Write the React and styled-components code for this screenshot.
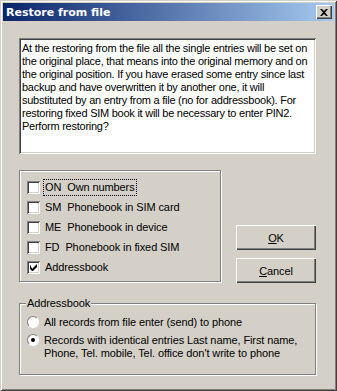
import React, { useState } from "react";
import styled, { createGlobalStyle } from "styled-components";

const Global = createGlobalStyle`
  html, body { margin: 0; padding: 0; background: #d4d0c8; }
  body { font-family: "Liberation Sans", Arial, sans-serif; font-size: 11px; color: #000; letter-spacing: -0.1px; }
`;

const Window = styled.div`
  width: 337px;
  height: 391px;
  box-sizing: border-box;
  background: #d4d0c8;
  padding: 3px;
  box-shadow: inset 1px 1px 0 #d4d0c8, inset -1px -1px 0 #404040,
    inset 2px 2px 0 #ffffff, inset -2px -2px 0 #808080;
  display: flex;
  flex-direction: column;
`;

const TitleBar = styled.div`
  height: 18px;
  display: flex;
  align-items: center;
  justify-content: space-between;
  padding: 0 2px 0 3px;
  background: linear-gradient(to right, #0a246a, #a6caf0);
`;

const Title = styled.span`
  color: #fff;
  font-family: Tahoma, "DejaVu Sans", sans-serif;
  font-weight: bold;
  font-size: 11px;
  letter-spacing: 0;
`;

const CloseBtn = styled.div`
  width: 16px;
  height: 14px;
  box-sizing: border-box;
  background: #d4d0c8;
  box-shadow: inset 1px 1px 0 #fff, inset -1px -1px 0 #404040,
    inset -2px -2px 0 #808080;
  display: flex;
  align-items: center;
  justify-content: center;
`;

const Body = styled.div`
  flex: 1;
  padding: 17px 18px 0 16px;
  display: flex;
  flex-direction: column;
`;

const Message = styled.div`
  height: 116px;
  box-sizing: border-box;
  background: #fff;
  padding: 4px 2px 4px 3px;
  line-height: 13px;
  letter-spacing: -0.25px;
  box-shadow: inset 1px 1px 0 #808080, inset -1px -1px 0 #fff,
    inset 2px 2px 0 #404040, inset -2px -2px 0 #d4d0c8;
`;

const Middle = styled.div`
  margin-top: 16px;
  display: flex;
  align-items: flex-end;
  gap: 15px;
`;

const Group = styled.div`
  position: relative;
  box-sizing: border-box;
  width: ${(p) => p.width || "auto"};
  height: ${(p) => p.height};
  margin-top: ${(p) => p.mt || "0"};
  border: 1px solid #808080;
  box-shadow: inset 1px 1px 0 #fff, 1px 1px 0 #fff;
  padding: ${(p) => p.pad};
  display: flex;
  flex-direction: column;
`;

const Legend = styled.span`
  position: absolute;
  top: -7px;
  left: 6px;
  padding: 0 1px;
  background: #d4d0c8;
  line-height: 13px;
`;

const Row = styled.label`
  display: flex;
  align-items: ${(p) => (p.top ? "flex-start" : "center")};
  height: ${(p) => (p.top ? "auto" : "20px")};
  margin-top: ${(p) => p.mt || "0"};
  gap: 4px;
  line-height: 13px;
`;

const Box = styled.span`
  width: 13px;
  height: 13px;
  flex: none;
  box-sizing: border-box;
  background: #fff;
  box-shadow: inset 1px 1px 0 #808080, inset -1px -1px 0 #fff,
    inset 2px 2px 0 #404040, inset -2px -2px 0 #d4d0c8;
  display: flex;
  align-items: center;
  justify-content: center;
`;

const Radio = styled.span`
  width: 12px;
  height: 12px;
  flex: none;
  border-radius: 50%;
  box-sizing: border-box;
  background: #fff;
  border: 1px solid;
  border-color: #808080 #fff #fff #808080;
  display: flex;
  align-items: center;
  justify-content: center;
  margin-top: 1px;
  &::after {
    content: "";
    width: 4px;
    height: 4px;
    border-radius: 50%;
    background: ${(p) => (p.on ? "#000" : "transparent")};
  }
`;

const Text = styled.span`
  white-space: pre;
  padding: 1px 1px;
  outline: ${(p) => (p.focus ? "1px dotted #000" : "none")};
`;

const Buttons = styled.div`
  display: flex;
  flex-direction: column;
  gap: 8px;
  margin-bottom: -1px;
`;

const Button = styled.div`
  width: 80px;
  height: 25px;
  box-sizing: border-box;
  background: #d4d0c8;
  box-shadow: inset 1px 1px 0 #fff, inset -1px -1px 0 #404040,
    inset -2px -2px 0 #808080;
  display: flex;
  align-items: center;
  justify-content: center;
  u { text-decoration: underline; }
`;

const Check = () => (
  <svg width="7" height="7" viewBox="0 0 7 7">
    <path d="M0 2h1v2h1v1h1v-1h1v-1h1v-1h1v-1h1v3h-1v1h-1v1h-1v1h-1v1h-1v-1h-1v-1h-1z" fill="#000" transform="translate(0,-0.5)" />
  </svg>
);

const books = [
  ["ON  Own numbers", false, true],
  ["SM  Phonebook in SIM card", false],
  ["ME  Phonebook in device", false],
  ["FD  Phonebook in fixed SIM", false],
  ["Addressbook", true],
];

export default function App() {
  const [mode] = useState(1);
  return (
    <Window>
      <Global />
      <TitleBar>
        <Title>Restore from file</Title>
        <CloseBtn>
          <svg width="8" height="7" viewBox="0 0 8 7">
            <path d="M0 0h2l2 2 2-2h2L5 3.5 8 7H6L4 5 2 7H0l3-3.5z" fill="#000" />
          </svg>
        </CloseBtn>
      </TitleBar>
      <Body>
        <Message>
          At the restoring from the file all the single entries will be set on the original place, that
          means into the original memory and on the original position. If you have erased some entry
          since last backup and have overwritten it by another one, it will substituted by an entry from a
          file (no for addressbook). For restoring fixed SIM book it will be necessary to enter PIN2.
          Perform restoring?
        </Message>
        <Middle>
          <Group width="204px" height="112px" pad="6px 0 0 7px">
            {books.map(([label, on, focus]) => (
              <Row key={label}>
                <Box>{on && <Check />}</Box>
                <Text focus={focus}>{label}</Text>
              </Row>
            ))}
          </Group>
          <Buttons>
            <Button>
              <u>O</u>K
            </Button>
            <Button>
              <u>C</u>ancel
            </Button>
          </Buttons>
        </Middle>
        <Group height="72px" pad="11px 0 0 7px" mt="21px">
          <Legend>Addressbook</Legend>
          <Row top>
            <Radio on={mode === 0} />
            <Text>All records from file enter (send) to phone</Text>
          </Row>
          <Row top mt="3px">
            <Radio on={mode === 1} />
            <Text>{"Records with identical entries Last name, First name,\nPhone, Tel. mobile, Tel. office don't write to phone"}</Text>
          </Row>
        </Group>
      </Body>
    </Window>
  );
}
